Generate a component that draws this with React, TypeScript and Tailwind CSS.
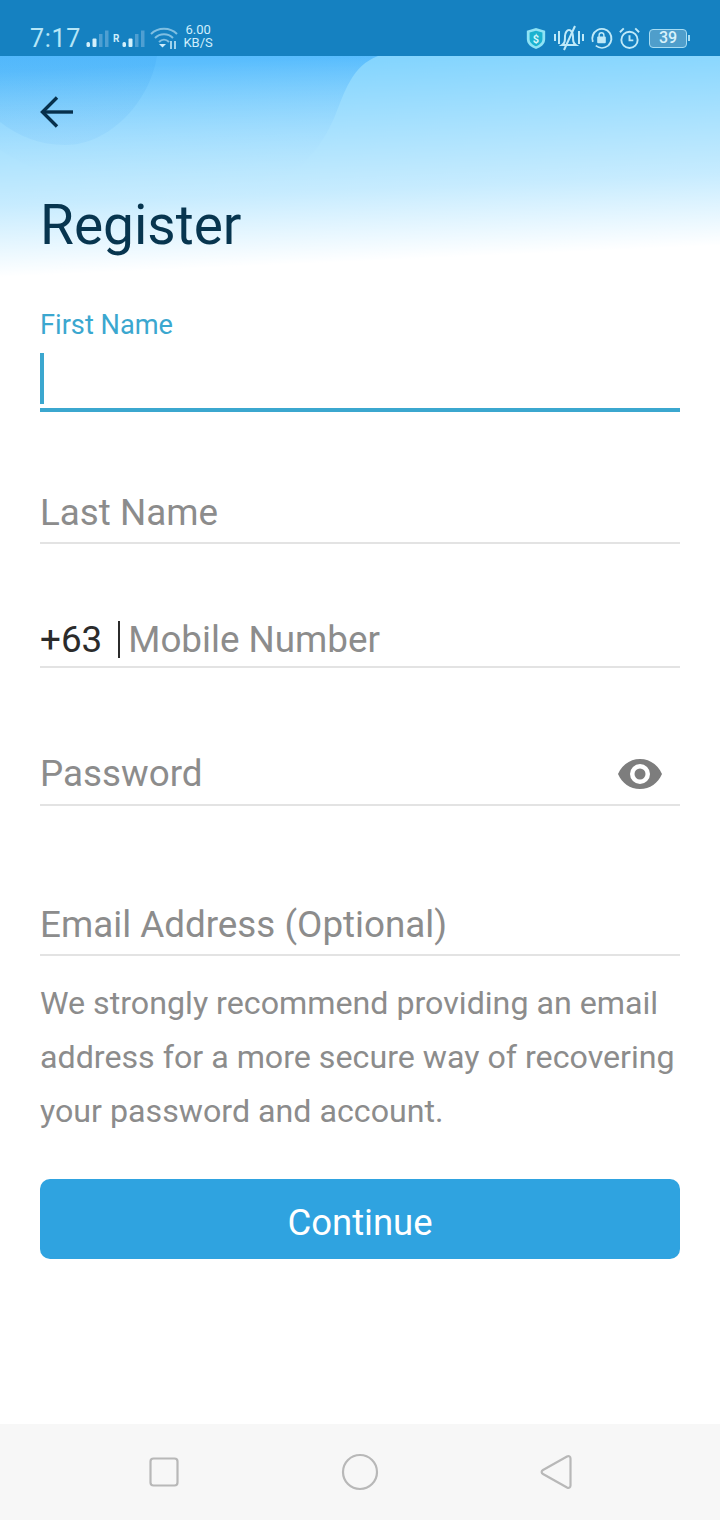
// Register screen
const roboto = 'font-["Roboto",sans-serif]';

function SignalBars() {
  return (
    <svg width="23" height="18" viewBox="0 0 23 18">
      <rect x="0.500" y="12" width="3.500" height="5" rx="1.500" fill="#d3f0fb" />
      <rect x="6.500" y="8.500" width="4" height="8.500" rx="1" fill="#d3f0fb" />
      <rect x="13" y="4" width="3.500" height="13" fill="#4f9fd2" />
      <rect x="19" y="0.500" width="3.500" height="16.500" fill="#4f9fd2" />
    </svg>
  );
}

function StatusBar() {
  return (
    <div className="flex h-14 shrink-0 items-end bg-[#1581c1] pb-[2px] pl-[30px] pr-[30px]">
      <span className="text-[25px] leading-[30px] tracking-[0.7px] text-[#b6e6f7]">7:17</span>
      <div className="mb-[6px] ml-[5px] flex items-center">
        <SignalBars />
        <span className="ml-[4px] mr-[3px] text-[10px] font-bold leading-none text-[#cfeefc]">R</span>
        <SignalBars />
      </div>
      <svg className="mb-[4px] ml-[5px]" width="28" height="24" viewBox="0 0 28 24" fill="none" stroke="#7fbfe2" strokeWidth="2">
        <path d="M1 8C8 1 20 1 27 8" />
        <path d="M5 12C10 7 18 7 23 12" />
        <path d="M9 16C12 13 16 13 19 16" />
        <path d="M9 18h7l-3.500 3.500z" fill="#cfeefc" stroke="none" />
        <path d="M21 15v8M25 15v8" stroke="#cfeefc" strokeWidth="1.500" />
      </svg>
      <div className="mb-[5px] ml-[5px] flex flex-col items-center text-[13px] leading-[13px] text-[#cfeefc]">
        <span>6.00</span>
        <span>KB/S</span>
      </div>
      <div className="mb-[3px] ml-auto flex items-center">
        <svg width="22" height="25" viewBox="0 0 24 25">
          <path d="M12 1l10 3v9c0 6-5 9-10 11C7 22 2 19 2 13V4z" fill="#8fe3f5" />
          <path d="M12 4l7 2v7c0 4-3 6-7 8-4-2-7-4-7-8V6z" fill="#1cb2cf" />
          <text x="12" y="17" textAnchor="middle" fontSize="12" fontWeight="700" fill="#d7f6fb" fontFamily="Roboto">$</text>
        </svg>
        <svg className="ml-[7px]" width="30" height="26" viewBox="0 0 30 26" fill="none" stroke="#bfe9f8" strokeWidth="2">
          <path d="M8 20c3-2 3-4 3-9 0-3 2-6 4-6s4 3 4 6c0 5 0 7 3 9z" />
          <path d="M21 1L10 25" />
          <path d="M1 9v7M5 6v13M25 6v13M29 9v7" />
        </svg>
        <svg className="ml-[6px]" width="23" height="24" viewBox="0 0 24 24" fill="none" stroke="#bfe9f8" strokeWidth="2">
          <path d="M3 16A10 10 0 1 1 19 20" />
          <path d="M19 20A10 10 0 0 1 6 20" strokeWidth="1.500" />
          <rect x="7.500" y="10.500" width="9" height="7" rx="1" fill="#bfe9f8" stroke="none" />
          <path d="M9.500 11V9a2.500 2.500 0 0 1 5 0v2" strokeWidth="1.500" />
        </svg>
        <svg className="ml-[5px]" width="23" height="24" viewBox="0 0 24 24" fill="none" stroke="#bfe9f8" strokeWidth="2">
          <circle cx="12" cy="14" r="8.500" />
          <path d="M12 9v5.500h4" />
          <path d="M2 6l4-4M22 6l-4-4" />
        </svg>
        <div className="ml-[8px] flex items-center">
          <div className="flex h-[19px] w-[38px] items-center justify-center rounded-[4px] border border-[#a6dcf3] bg-[#4f9ecb] text-[16px] font-medium leading-none text-[#d8f2fb]">
            39
          </div>
          <div className="ml-[1px] h-[6px] w-[2px] bg-[#a6dcf3]" />
        </div>
      </div>
    </div>
  );
}

function Header() {
  return (
    <div className="relative h-[234px] shrink-0 overflow-hidden bg-[#82d4fe]">
      {/* background waves */}
      <svg className="absolute inset-0" width="720" height="234" viewBox="0 0 720 234">
        <defs>
          <linearGradient id="wave" x1="0" y1="0" x2="0" y2="1">
            <stop offset="0" stopColor="#49b4fd" stopOpacity="0.75" />
            <stop offset="1" stopColor="#8fd8fe" stopOpacity="0" />
          </linearGradient>
          <linearGradient id="blob" x1="0" y1="0" x2="0" y2="1">
            <stop offset="0" stopColor="#3fa9f5" stopOpacity="0.25" />
            <stop offset="1" stopColor="#3fa9f5" stopOpacity="0.2" />
          </linearGradient>
          <linearGradient id="fade" gradientUnits="userSpaceOnUse" x1="356" y1="0" x2="365" y2="205">
            <stop offset="0" stopColor="#ffffff" stopOpacity="0" />
            <stop offset="0.65" stopColor="#ffffff" stopOpacity="0.55" />
            <stop offset="1" stopColor="#ffffff" stopOpacity="1" />
          </linearGradient>
        </defs>
        <path d="M0 0H378C352 10 345 35 335 60 320 95 295 125 249 140 190 155 70 140 0 94Z" fill="url(#wave)" />
        <path d="M0 0H157C150 45 110 89 65 89 40 89 18 80 0 66Z" fill="url(#blob)" />
        <rect width="720" height="234" fill="url(#fade)" />
      </svg>
      <div className="relative pl-[40px] pt-[40px]">
        <svg className="block" width="34" height="32" viewBox="0 0 34 32" fill="none" stroke="#07304c" strokeWidth="3.400">
          <path d="M33 16H3" />
          <path d="M17 1.500L2.500 16 17 30.500" />
        </svg>
        <h1 className={`${roboto} mt-[64px] text-[55px] font-normal leading-[66px] text-[#07354f]`}>Register</h1>
      </div>
    </div>
  );
}

function Field({ className, children }: { className: string; children: React.ReactNode }) {
  return <div className={`flex items-center border-b-2 border-[#e3e3e3] ${className}`}>{children}</div>;
}

const placeholder = 'text-[36.8px] leading-[44px] text-[#8c8c8c]';

function NavBar() {
  return (
    <div className="flex h-24 shrink-0 items-center bg-[#f7f7f7] pb-[1px] pl-[149px]">
      <svg width="30" height="30" viewBox="0 0 30 30" fill="none" stroke="#b8b8b8" strokeWidth="2.200">
        <rect x="1.500" y="1.500" width="27" height="27" rx="3" />
      </svg>
      <svg className="ml-[162px]" width="38" height="38" viewBox="0 0 38 38" fill="none" stroke="#b8b8b8" strokeWidth="2.200">
        <circle cx="19" cy="19" r="17" />
      </svg>
      <svg className="ml-[161px]" width="32" height="36" viewBox="0 0 32 36" fill="none" stroke="#b8b8b8" strokeWidth="2.200">
        <path d="M27 2.500C29 1.500 30.500 2.500 30.500 4.500V31.500C30.500 33.500 29 34.500 27 33.500L3 20C1.200 19 1.200 17 3 16Z" />
      </svg>
    </div>
  );
}

export default function App() {
  return (
    <div className={`${roboto} flex h-[1520px] w-[720px] flex-col overflow-hidden bg-white`}>
      <StatusBar />
      <Header />
      <div className="flex-1 px-[40px]">
        <div className="h-[122px] border-b-[4px] border-[#3ba7cf] pt-[19px]">
          <label className="block text-[27.2px] leading-[32px] text-[#3ba7cf]">First Name</label>
          <div className="mt-[12px] h-[51px] w-[4px] bg-[#3ba7cf]" />
        </div>
        <Field className="mt-[76px] h-[56px] pb-[4px]">
          <span className={placeholder}>Last Name</span>
        </Field>
        <Field className="mt-[68px] h-[56px] pt-[1px]">
          <span className="text-[36.8px] leading-[44px] text-[#2b2b2b]">+63</span>
          <div className="ml-[16px] mr-[8px] h-[37px] w-[2px] bg-[#2b2b2b]" />
          <span className={placeholder}>Mobile Number</span>
        </Field>
        <Field className="mt-[80px] h-[58px] justify-between pb-[4px]">
          <span className={placeholder}>Password</span>
          <svg className="mr-[17px]" width="46" height="32" viewBox="0 0 46 32">
            <path fillRule="evenodd" fill="#7d7d7d" d="M23 1C13 1 5 7 1 16c4 9 12 15 22 15s18-6 22-15C41 7 33 1 23 1Zm0 25a10 10 0 1 1 0-20 10 10 0 0 1 0 20Z" />
            <circle cx="23" cy="16" r="5.500" fill="#7d7d7d" />
          </svg>
        </Field>
        <Field className="mt-[92px] h-[58px] pb-[3px]">
          <span className={placeholder}>Email Address (Optional)</span>
        </Field>
        <p className="mt-[20px] text-[32.2px] leading-[54px] text-[#8c8c8c]">
          We strongly recommend providing an email address for a more secure way of recovering your password and account.
        </p>
        <button className="mt-[41px] h-20 w-full rounded-[10px] bg-[#2fa3e0] pt-[8px] text-[36.5px] text-white">Continue</button>
      </div>
      <NavBar />
    </div>
  );
}
